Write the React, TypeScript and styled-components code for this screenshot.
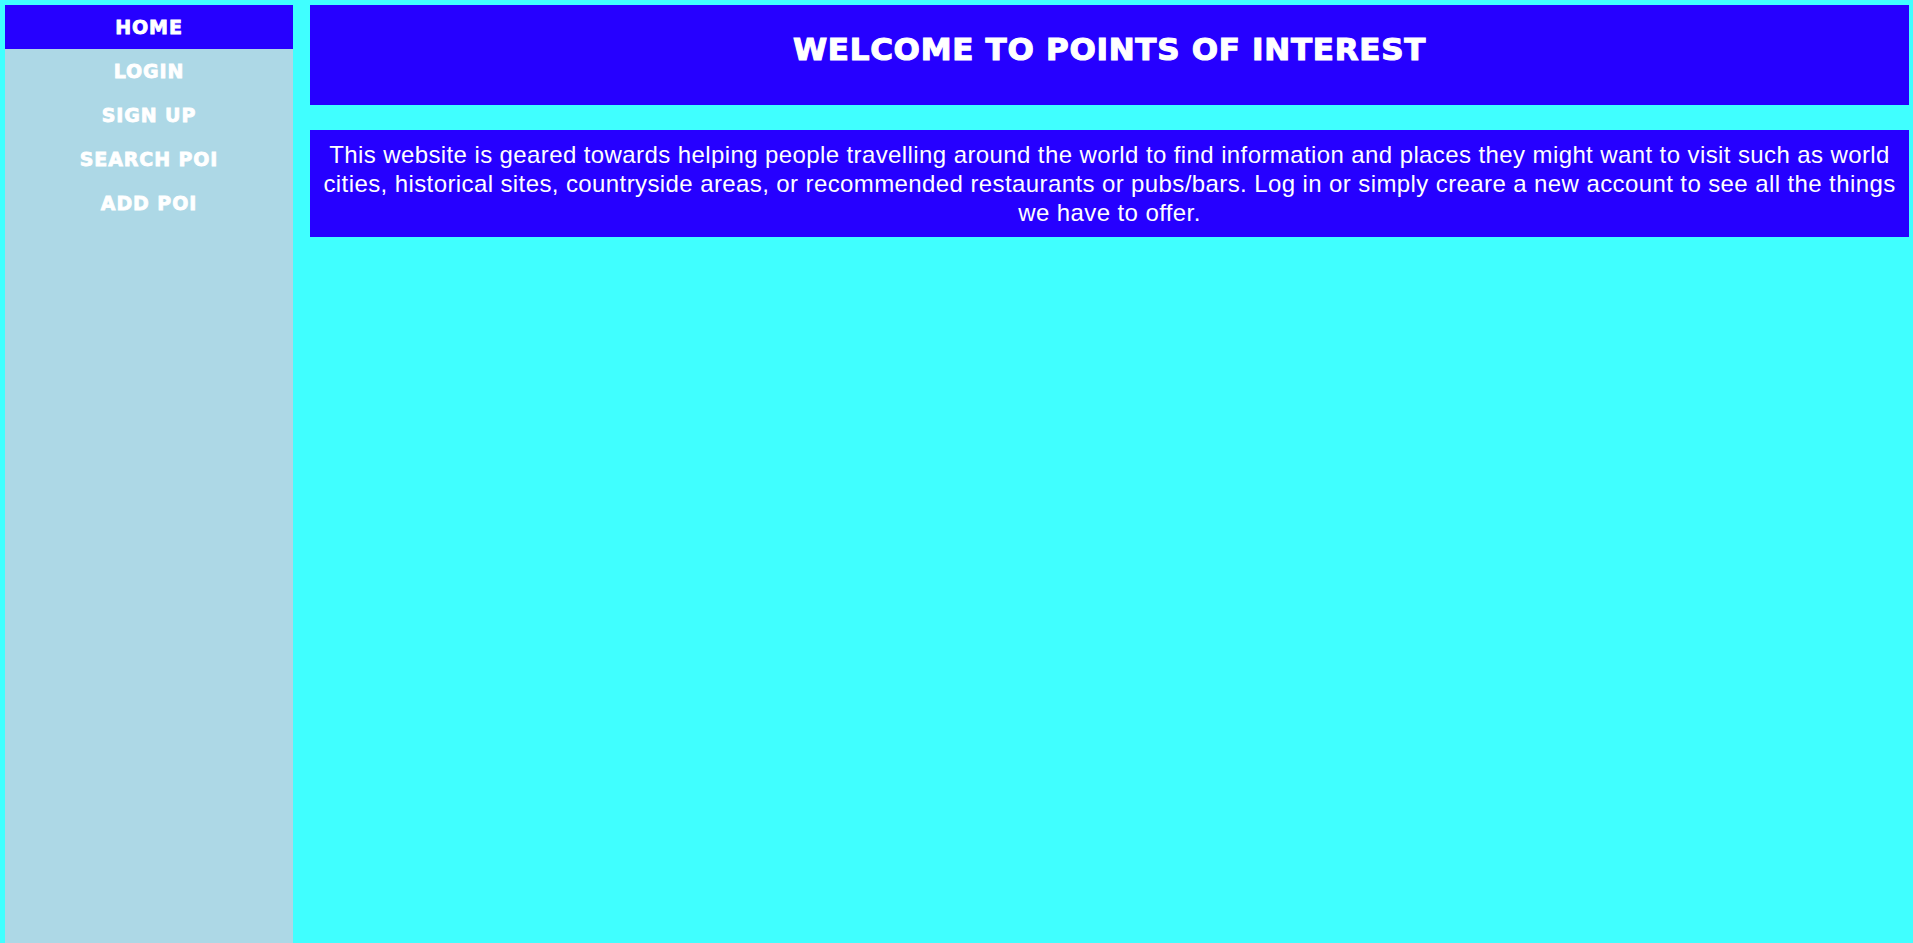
import React from "react";
import styled, { createGlobalStyle } from "styled-components";

const GlobalStyle = createGlobalStyle`
  html, body {
    margin: 0;
    padding: 0;
    background: #40ffff;
    font-family: "Liberation Sans", Arial, sans-serif;
  }
`;

const Page = styled.div`
  display: flex;
  align-items: stretch;
  min-height: 100vh;
  box-sizing: border-box;
  padding: 5px 4px 0 5px;
  gap: 17px;
`;

const Sidebar = styled.nav`
  width: 288px;
  flex-shrink: 0;
  background: #add8e6;
  display: flex;
  flex-direction: column;
`;

const NavItem = styled.a<{ $active?: boolean }>`
  display: flex;
  align-items: center;
  justify-content: center;
  height: 44px;
  box-sizing: border-box;
  background: ${(p) => (p.$active ? "#2600ff" : "transparent")};
  color: #ffffff;
  font-family: "DejaVu Sans", "Liberation Sans", sans-serif;
  font-weight: bold;
  font-size: 19px;
  letter-spacing: 0.9px;
  -webkit-text-stroke: 0.8px #ffffff;
  text-decoration: none;
`;

const Main = styled.main`
  flex: 1;
  display: flex;
  flex-direction: column;
  gap: 25px;
`;

const Header = styled.header`
  background: #2600ff;
  height: 100px;
  box-sizing: border-box;
  padding-top: 26px;
  display: flex;
  justify-content: center;
  align-items: flex-start;
`;

const Title = styled.h1`
  margin: 0;
  color: #ffffff;
  font-family: "DejaVu Sans", "Liberation Sans", sans-serif;
  font-size: 31px;
  line-height: 36px;
  letter-spacing: 0.7px;
  font-weight: bold;
  -webkit-text-stroke: 1.1px #ffffff;
`;

const Intro = styled.p`
  margin: 0;
  background: #2600ff;
  color: #ffffff;
  font-size: 24px;
  letter-spacing: 0.4px;
  line-height: 29px;
  text-align: center;
  padding: 10px 6px;
`;

const items = ["HOME", "LOGIN", "SIGN UP", "SEARCH POI", "ADD POI"];

export default function App() {
  return (
    <>
      <GlobalStyle />
      <Page>
        <Sidebar>
          {items.map((it, i) => (
            <NavItem key={it} href="#" $active={i === 0}>
              {it}
            </NavItem>
          ))}
        </Sidebar>
        <Main>
          <Header>
            <Title>WELCOME TO POINTS OF INTEREST</Title>
          </Header>
          <Intro>
            This website is geared towards helping people travelling around the world to find
            information and places they might want to visit such as world cities, historical
            sites, countryside areas, or recommended restaurants or pubs/bars. Log in or simply
            creare a new account to see all the things we have to offer.
          </Intro>
        </Main>
      </Page>
    </>
  );
}
